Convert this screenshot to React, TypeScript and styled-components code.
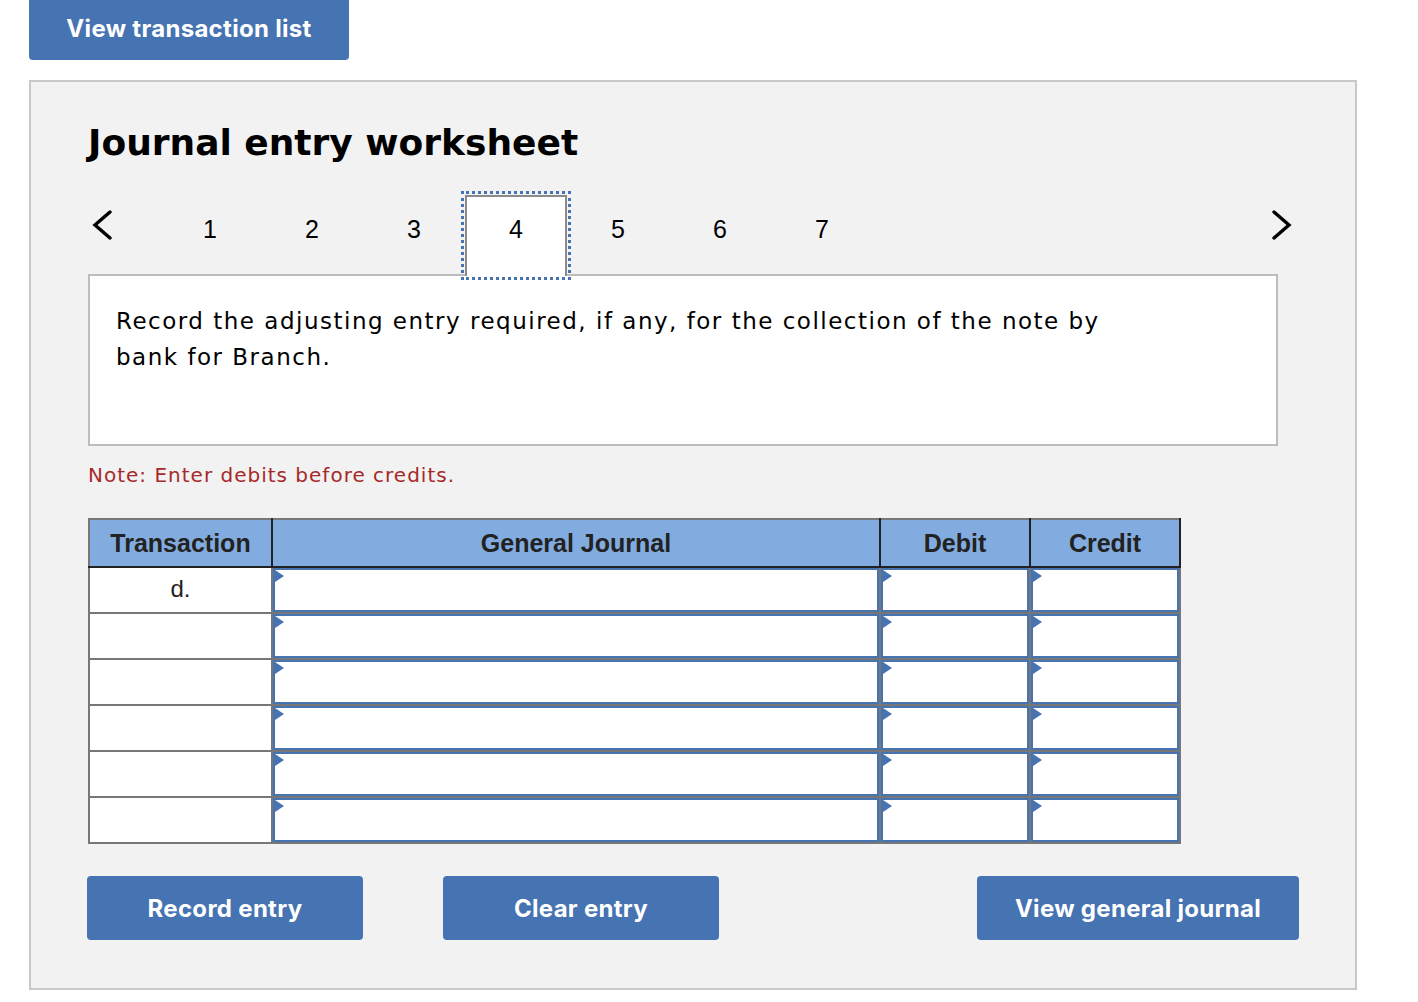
import React, { useState } from 'react';
import styled, { createGlobalStyle } from 'styled-components';

const GlobalStyle = createGlobalStyle`
  html, body {
    margin: 0;
    padding: 0;
    background: #fff;
  }
  body {
    font-family: "DejaVu Sans", Verdana, sans-serif;
  }
`;

const BLUE = '#4673b2';

const Page = styled.div`
  padding: 0 0 0 29px;
  width: 1328px;
`;

const Button = styled.button<{ $w: number }>`
  width: ${p => p.$w}px;
  height: 64px;
  border: none;
  border-radius: 4px;
  background: ${BLUE};
  color: #fff;
  font-family: Inter, "Liberation Sans", sans-serif;
  font-weight: 700;
  font-size: 24px;
  letter-spacing: 0.3px;
  cursor: pointer;
  padding: 0;
`;

const TopButton = styled(Button)`
  margin-top: -4px;
  display: block;
`;

const Panel = styled.div`
  margin-top: 20px;
  box-sizing: border-box;
  width: 1328px;
  height: 910px;
  background: #f2f2f2;
  border: 2px solid #c8c8c8;
  padding: 39px 0 0 57px;
`;

const Title = styled.h1`
  margin: 0;
  font-size: 36px;
  line-height: 44px;
  font-weight: 700;
  color: #000;
`;

const Nav = styled.div`
  margin-top: 30px;
  width: 1211px;
  display: flex;
  align-items: flex-start;
  position: relative;
  z-index: 1;
`;

const Arrow = styled.button<{ $right?: boolean }>`
  background: none;
  border: none;
  height: 80px;
  width: ${p => (p.$right ? '28px' : '71px')};
  display: flex;
  align-items: center;
  justify-content: flex-start;
  margin-left: ${p => (p.$right ? 'auto' : '0')};
  padding: 0 0 0 ${p => (p.$right ? '0' : '4px')};
  cursor: pointer;
  svg {
    margin-top: -20px;
  }
`;

const Tab = styled.button<{ $active?: boolean }>`
  box-sizing: border-box;
  width: 102px;
  padding: 0 0 14px;
  font-family: "Liberation Sans", Arial, sans-serif;
  font-size: 25px;
  color: #000;
  cursor: pointer;
  background: ${p => (p.$active ? '#fff' : 'transparent')};
  border: 2px solid ${p => (p.$active ? '#8a8a8a' : 'transparent')};
  border-bottom: none;
  height: ${p => (p.$active ? '81px' : '80px')};
  outline: ${p => (p.$active ? `3px dotted ${BLUE}` : 'none')};
  outline-offset: 1px;
`;

const Prompt = styled.div`
  box-sizing: border-box;
  width: 1190px;
  height: 172px;
  margin-top: -2px;
  background: #fff;
  border: 2px solid #bdbdbd;
  padding: 27px 26px 0;
`;

const PromptText = styled.p`
  margin: 0;
  max-width: 1020px;
  font-size: 23px;
  letter-spacing: 1.5px;
  line-height: 36px;
  color: #000;
`;

const Note = styled.p`
  margin: 17px 0 0;
  font-size: 20px;
  letter-spacing: 1px;
  line-height: 24px;
  color: #a52a2a;
`;

const Table = styled.table`
  margin-top: 31px;
  border-collapse: collapse;
  table-layout: fixed;
  border: 2px solid #777;
  font-family: "Liberation Sans", Arial, sans-serif;
`;

const Th = styled.th<{ $w: number }>`
  width: ${p => p.$w}px;
  height: 46px;
  padding: 0;
  background: #82acdf;
  color: #222;
  font-size: 25px;
  font-weight: 700;
  text-align: center;
  border: 2px solid #222;
  border-top-color: #777;
  &:first-child {
    border-left-color: #777;
  }
`;

const Td = styled.td`
  height: 44px;
  padding: 0;
  background: #fff;
  border: 2px solid #777;
  font-size: 24px;
  color: #222;
  text-align: center;
  vertical-align: top;
`;

const TransLabel = styled.div`
  padding-top: 6px;
  line-height: 30px;
`;

const Entry = styled.div`
  position: relative;
  box-sizing: border-box;
  height: 44px;
  border: 2px solid ${BLUE};
  background: #fff;
  &::before {
    content: '';
    position: absolute;
    left: 0;
    top: 0;
    border-style: solid;
    border-width: 6px 0 6px 9px;
    border-color: transparent transparent transparent ${BLUE};
  }
`;

const Actions = styled.div`
  margin-top: 32px;
  margin-left: -1px;
  width: 1212px;
  display: flex;
  gap: 80px;
  & > :last-child {
    margin-left: auto;
  }
`;

const Chevron: React.FC<{ dir: 'left' | 'right' }> = ({ dir }) => (
  <svg width="22" height="30" viewBox="0 0 22 30">
    <polyline
      points={dir === 'left' ? '18,2 3,15 18,28' : '3,2 18,15 3,28'}
      fill="none"
      stroke="#000"
      strokeWidth="3.4"
      strokeLinecap="round"
      strokeLinejoin="miter"
    />
  </svg>
);

const rows = ['d.', '', '', '', '', ''];

const App: React.FC = () => {
  const [active, setActive] = useState(4);

  return (
    <Page>
      <GlobalStyle />
      <TopButton $w={320}>View transaction list</TopButton>
      <Panel>
        <Title>Journal entry worksheet</Title>
        <Nav>
          <Arrow onClick={() => setActive(Math.max(1, active - 1))}>
            <Chevron dir="left" />
          </Arrow>
          {[1, 2, 3, 4, 5, 6, 7].map(n => (
            <Tab key={n} $active={n === active} onClick={() => setActive(n)}>
              {n}
            </Tab>
          ))}
          <Arrow $right onClick={() => setActive(Math.min(7, active + 1))}>
            <Chevron dir="right" />
          </Arrow>
        </Nav>
        <Prompt>
          <PromptText>
            Record the adjusting entry required, if any, for the collection of the note by bank for Branch.
          </PromptText>
        </Prompt>
        <Note>Note: Enter debits before credits.</Note>
        <Table>
          <thead>
            <tr>
              <Th $w={181}>Transaction</Th>
              <Th $w={606}>General Journal</Th>
              <Th $w={148}>Debit</Th>
              <Th $w={148}>Credit</Th>
            </tr>
          </thead>
          <tbody>
            {rows.map((label, i) => (
              <tr key={i}>
                <Td>
                  <TransLabel>{label}</TransLabel>
                </Td>
                <Td>
                  <Entry />
                </Td>
                <Td>
                  <Entry />
                </Td>
                <Td>
                  <Entry />
                </Td>
              </tr>
            ))}
          </tbody>
        </Table>
        <Actions>
          <Button $w={276}>Record entry</Button>
          <Button $w={276}>Clear entry</Button>
          <Button $w={322}>View general journal</Button>
        </Actions>
      </Panel>
    </Page>
  );
};

export default App;
